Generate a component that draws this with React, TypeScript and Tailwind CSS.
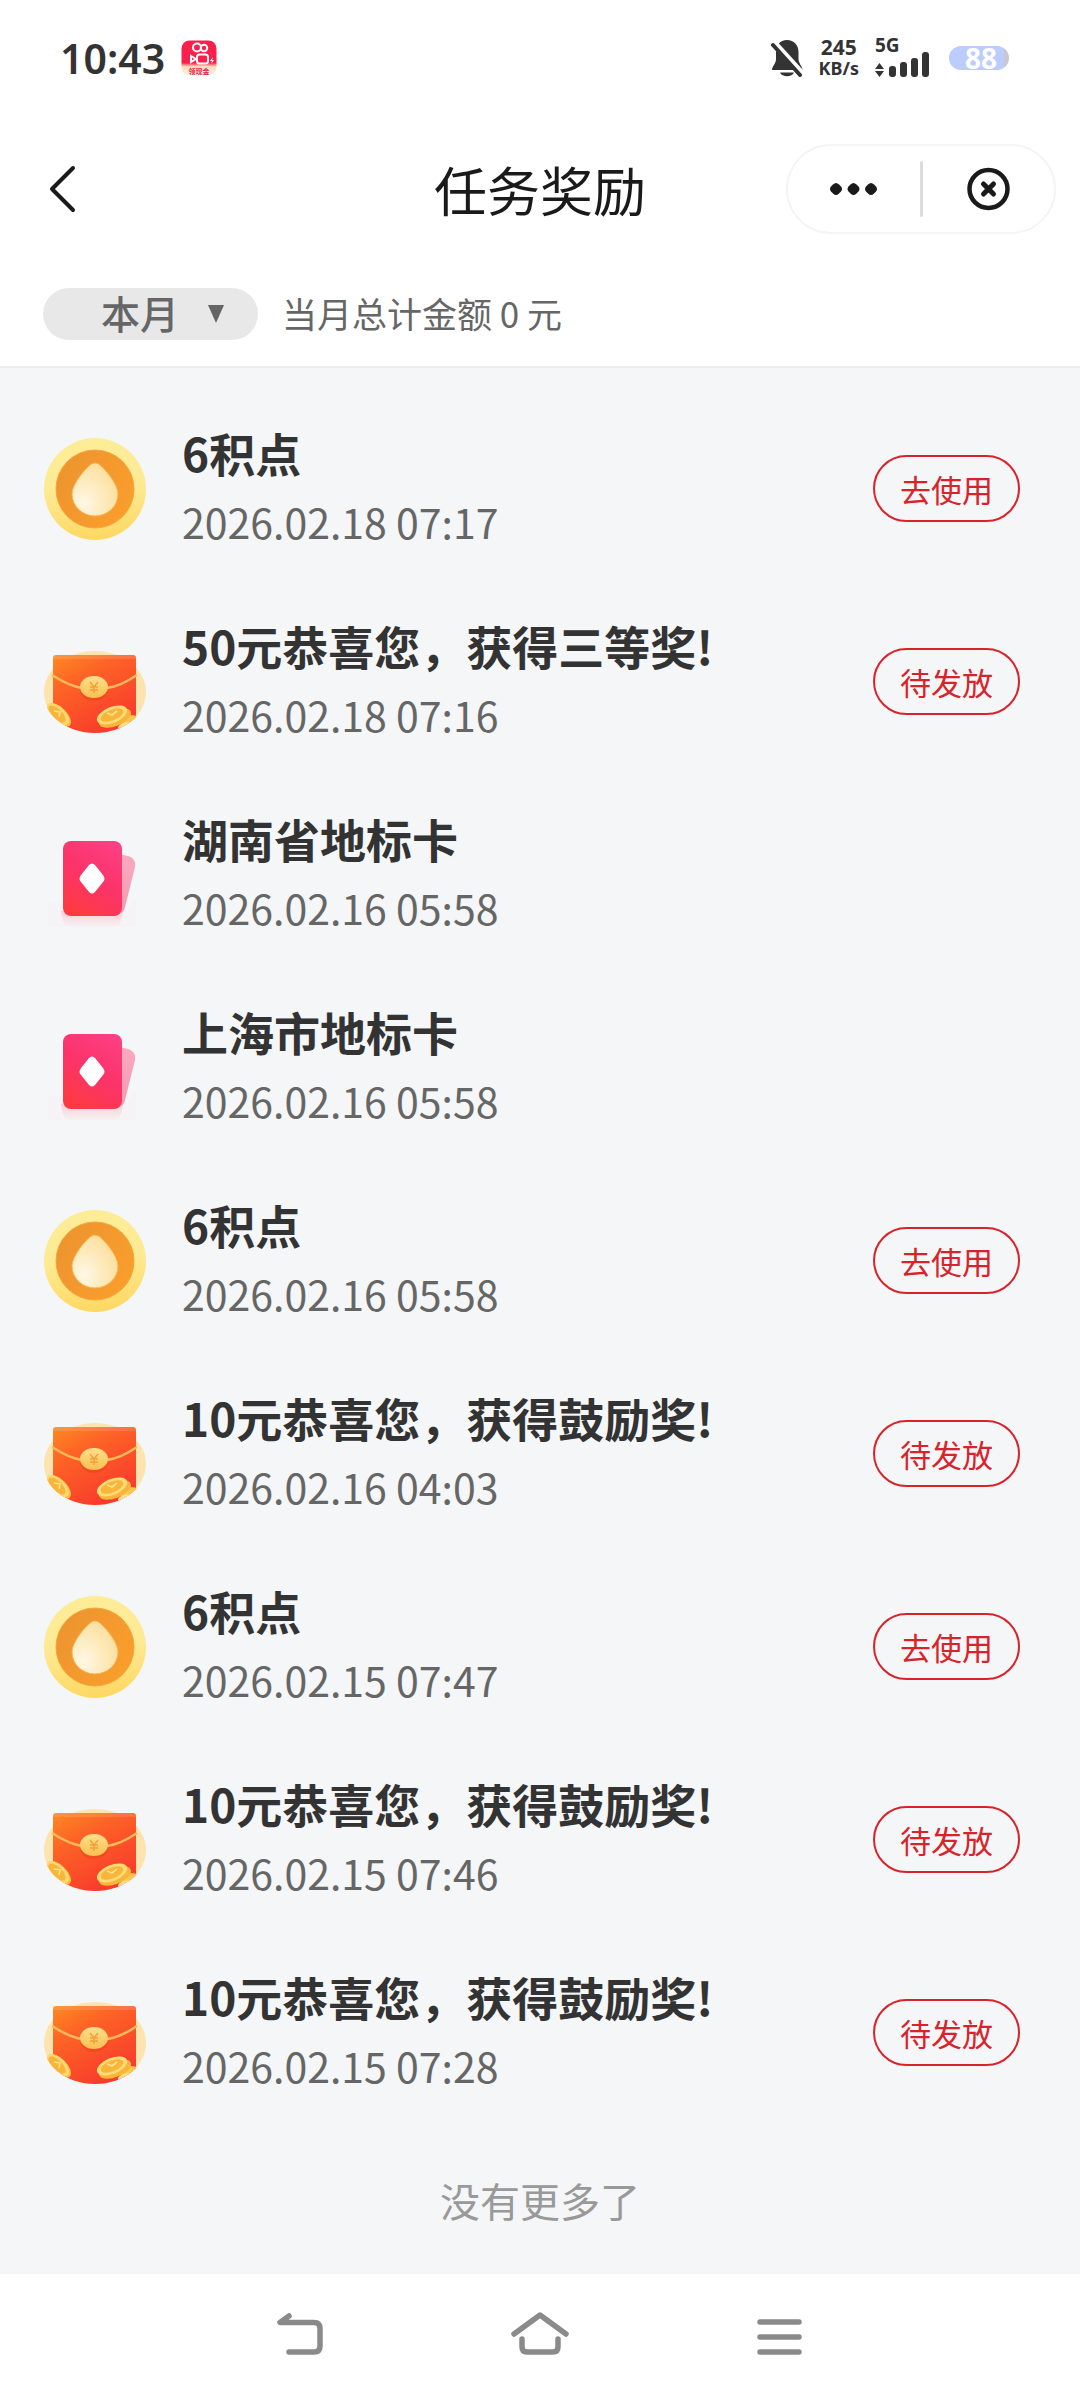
import type { ReactNode } from "react";

type Kind = "point" | "packet" | "card";

interface Reward {
   kind: Kind;
   title: string;
   time: string;
   action?: string;
}

const rewards: Reward[] = [
   { kind: "point", title: "6积点", time: "2026.02.18 07:17", action: "去使用" },
   { kind: "packet", title: "50元恭喜您，获得三等奖!", time: "2026.02.18 07:16", action: "待发放" },
   { kind: "card", title: "湖南省地标卡", time: "2026.02.16 05:58" },
   { kind: "card", title: "上海市地标卡", time: "2026.02.16 05:58" },
   { kind: "point", title: "6积点", time: "2026.02.16 05:58", action: "去使用" },
   { kind: "packet", title: "10元恭喜您，获得鼓励奖!", time: "2026.02.16 04:03", action: "待发放" },
   { kind: "point", title: "6积点", time: "2026.02.15 07:47", action: "去使用" },
   { kind: "packet", title: "10元恭喜您，获得鼓励奖!", time: "2026.02.15 07:46", action: "待发放" },
   { kind: "packet", title: "10元恭喜您，获得鼓励奖!", time: "2026.02.15 07:28", action: "待发放" },
];

function PointIcon() {
   return (
      <svg viewBox="0 0 104 104" className="size-26 shrink-0" aria-hidden="true">
         <defs>
            <linearGradient id="coinRim" x1="0.3" y1="0" x2="0.4" y2="1">
               <stop offset="0" stopColor="#fdec96" />
               <stop offset="0.5" stopColor="#feea94" />
               <stop offset="1" stopColor="#fdd862" />
            </linearGradient>
            <linearGradient id="coinFace" x1="0" y1="0" x2="1" y2="0.6">
               <stop offset="0" stopColor="#ec9330" />
               <stop offset="1" stopColor="#f99d2c" />
            </linearGradient>
            <radialGradient id="drop" cx="0.25" cy="0.75" r="0.9">
               <stop offset="0" stopColor="#fff8e6" />
               <stop offset="0.5" stopColor="#fdeabb" />
               <stop offset="1" stopColor="#fddc96" />
            </radialGradient>
         </defs>
         <circle cx="52" cy="52" r="51" fill="url(#coinRim)" />
         <circle cx="52" cy="52" r="39" fill="url(#coinFace)" stroke="#f3a63c" strokeWidth="1" />
         <path d="M47 28q5-4 10 0c7 6 18 20 18 29a23 22 0 0 1-46 0c0-9 11-23 18-29z" fill="url(#drop)" stroke="#f6b455" strokeWidth="1" />
      </svg>
   );
}

function PacketIcon() {
   return (
      <svg viewBox="0 0 104 104" className="size-26 shrink-0" aria-hidden="true">
         <defs>
            <linearGradient id="packet" x1="0" y1="0" x2="0.6" y2="1">
               <stop offset="0" stopColor="#fd8a22" />
               <stop offset="0.35" stopColor="#fd6426" />
               <stop offset="1" stopColor="#f93a2c" />
            </linearGradient>
            <linearGradient id="gold" x1="0" y1="0" x2="0" y2="1">
               <stop offset="0" stopColor="#fde08c" />
               <stop offset="1" stopColor="#fbbf4f" />
            </linearGradient>
            <clipPath id="packetClip">
               <path d="M0 20h104v42c0 22-23 41-52 41S0 84 0 62z" />
            </clipPath>
         </defs>
         <ellipse cx="52" cy="62" rx="51" ry="41" fill="#fde3ae" />
         <g clipPath="url(#packetClip)">
            <path d="M10 28q0-3 3-3h77q3 0 3 3v76H10z" fill="url(#packet)" />
            <path d="M10 29v-1q0-3 3-3h77q3 0 3 3v1z" fill="#fff" opacity="0.12" />
            <path d="M9 45q17 11 30 13M64 58q14-2 30-13" fill="none" stroke="#fcb95a" strokeWidth="2.5" />
            <ellipse cx="51" cy="60" rx="14" ry="11" fill="#e8391e" opacity="0.4" />
            <ellipse cx="51" cy="57" rx="14" ry="11" fill="url(#gold)" />
            <path d="M47 52l4 5 4-5M51 57v6M47 57h8M47 60h8" fill="none" stroke="#f0a040" strokeWidth="1.4" />
            <ellipse cx="16" cy="85" rx="15" ry="7.5" transform="rotate(44 16 85)" fill="#fbbf3c" />
            <ellipse cx="15" cy="84" rx="14" ry="7" transform="rotate(44 15 84)" fill="#fdd771" />
            <ellipse cx="14" cy="84" rx="11" ry="5" transform="rotate(44 14 84)" fill="#f9b53a" />
            <path d="M11 81l6 1-1 5" fill="none" stroke="#fde08c" strokeWidth="1.6" />
            <ellipse cx="86" cy="90" rx="13" ry="5" fill="#fcc84b" />
            <ellipse cx="87" cy="98" rx="12" ry="6" fill="#fddf8e" />
            <ellipse cx="72" cy="88" rx="17" ry="8" transform="rotate(-22 72 88)" fill="#f9b53a" />
            <ellipse cx="69" cy="85" rx="16" ry="8" transform="rotate(-22 69 85)" fill="#fddb76" />
            <ellipse cx="69" cy="85" rx="12" ry="5.5" transform="rotate(-22 69 85)" fill="#f9b53a" />
            <path d="M64 83l5 2 5-4" fill="none" stroke="#fde08c" strokeWidth="1.8" />
         </g>
      </svg>
   );
}

function CardIcon() {
   return (
      <svg viewBox="0 0 104 104" className="size-26 shrink-0" aria-hidden="true">
         <defs>
            <linearGradient id="cardFront" x1="0.8" y1="0" x2="0.3" y2="1">
               <stop offset="0" stopColor="#fd3f83" />
               <stop offset="0.5" stopColor="#fb336a" />
               <stop offset="1" stopColor="#fd3a42" />
            </linearGradient>
            <linearGradient id="cardBack" x1="0" y1="0" x2="0" y2="1">
               <stop offset="0" stopColor="#fba9c0" />
               <stop offset="1" stopColor="#f49aae" />
            </linearGradient>
            <linearGradient id="cardShadow" x1="0" y1="0" x2="0" y2="1">
               <stop offset="0" stopColor="#fbd0d6" />
               <stop offset="1" stopColor="#f6f1f4" />
            </linearGradient>
         </defs>
         <path d="M5 80h15v12h60l13-16v28H5z" fill="#f5f3f6" />
         <path d="M18 88h62q-2 16-8 16H26q-6 0-8-16z" fill="url(#cardShadow)" />
         <path d="M76 31l9 2c6 2 8 6 7 11L82 84c-1 5-4 7-10 8z" fill="url(#cardBack)" />
         <rect x="20" y="18" width="59" height="75" rx="8" fill="url(#cardFront)" />
         <path d="M46 42q3-3 6 0l8 10q3 4 0 7l-8 10q-3 3-6 0l-8-10q-3-3 0-7z" fill="#fff" />
      </svg>
   );
}

const icons: Record<Kind, ReactNode> = {
   point: <PointIcon />,
   packet: <PacketIcon />,
   card: <CardIcon />,
};

function StatusBar() {
   return (
      <section className="flex h-29 items-center justify-between pl-15 pr-[71px] text-[#333333]">
         <section className="flex items-center gap-4">
            <p className="text-[41px] leading-none font-semibold font-['Noto_Sans']">10:43</p>
            <svg viewBox="0 0 36 36" className="size-9" aria-hidden="true">
               <defs>
                  <linearGradient id="appBg" x1="0" y1="0" x2="0" y2="1">
                     <stop offset="0.64" stopColor="#fb1f4c" />
                     <stop offset="0.74" stopColor="#ffd9b8" />
                     <stop offset="1" stopColor="#fff6ec" />
                  </linearGradient>
               </defs>
               <rect x="0.5" y="0.5" width="35" height="35" rx="8" fill="url(#appBg)" />
               <g fill="none" stroke="#fff" strokeWidth="2">
                  <circle cx="16" cy="7.5" r="4" />
                  <circle cx="23" cy="8" r="3.2" />
                  <rect x="16" y="14.500" width="11" height="9" rx="2.500" />
                  <path d="M15 19l-5-3v6z" />
               </g>
               <path d="M32 17l-3 4h2l-1 3 3-4h-2z" fill="#fff" />
               <text x="18" y="34" textAnchor="middle" fontSize="7" fontWeight="bold" fill="#e0264c">领现金</text>
            </svg>
         </section>

         <section className="flex items-center">
            <svg viewBox="0 0 32 38" className="mr-4 h-[38px] w-8" aria-hidden="true">
               <path d="M16 1c7 0 11.500 5 11.500 12v7c0 4 4 8 4 11H1c0-4 4-6 4-11v-7C5 6 9 1 16 1z" fill="#333" />
               <path d="M9 33.500h14c-2 5-12 5-14 0z" fill="#333" />
               <path d="M0 1l31 34" stroke="#fff" strokeWidth="7" />
               <path d="M2 6l27 30" stroke="#333" strokeWidth="4" strokeLinecap="round" />
            </svg>
            <section className="mr-4 text-center font-['Noto_Sans'] font-bold">
               <p className="text-[21px] leading-[21px]">245</p>
               <p className="text-[18px] leading-[21px]">KB/s</p>
            </section>
            <section className="mr-5 font-['Noto_Sans'] font-bold">
               <p className="text-[19px] leading-[14px]">5G</p>
               <svg viewBox="0 0 54 26" className="h-[26px] w-[54px]" fill="#333" aria-hidden="true">
                  <path d="M0 17l4.500-6L9 17zM0 19h9l-4.500 6z" />
                  <rect x="14" y="14" width="7" height="11" rx="3" />
                  <rect x="25" y="10" width="7" height="15" rx="3" />
                  <rect x="36" y="6" width="7" height="19" rx="3" />
                  <rect x="47" y="0" width="7" height="25" rx="3" />
               </svg>
            </section>
            <p className="flex h-6 w-15 items-center justify-center rounded-full bg-linear-to-r from-[#bccdfd] from-92% to-[#cbc6cf] to-92% pl-1 font-['Noto_Sans'] text-[28px] leading-none font-bold text-white">
               88
            </p>
         </section>
      </section>
   );
}

function TitleBar() {
   return (
      <section className="grid h-[146px] grid-cols-[1fr_auto_1fr] items-center text-[#1a1a1a]">
         <button type="button" aria-label="返回" className="ml-12 justify-self-start">
            <svg viewBox="0 0 30 50" className="h-[50px] w-[30px]" fill="none" stroke="currentColor" strokeWidth="4" strokeLinecap="round" strokeLinejoin="round">
               <path d="M25 4L4 25l21 21" />
            </svg>
         </button>

         <h1 className="text-[53px] leading-none">任务奖励</h1>

         <section className="mr-6 flex h-[90px] w-[270px] items-center justify-self-end rounded-full border-2 border-[#f4f4f4]">
            <button type="button" aria-label="更多" className="flex flex-1 justify-center">
               <svg viewBox="0 0 48 14" className="h-[14px] w-12" fill="currentColor">
                  <path d="M6 1q1.500 0 3 1.500l2 2q2 2.500 0 5l-2 2q-3 3-6 0l-2-2q-2-2.500 0-5l2-2Q4.500 1 6 1z" />
                  <path d="M23.500 1q1.500 0 3 1.500l2 2q2 2.500 0 5l-2 2q-3 3-6 0l-2-2q-2-2.500 0-5l2-2Q22 1 23.500 1z" />
                  <path d="M41 1q1.500 0 3 1.500l2 2q2 2.500 0 5l-2 2q-3 3-6 0l-2-2q-2-2.500 0-5l2-2Q39.500 1 41 1z" />
               </svg>
            </button>
            <span className="h-14 w-[3px] rounded-full bg-[#dcdcdc]" />
            <button type="button" aria-label="关闭" className="flex flex-1 justify-center">
               <svg viewBox="0 0 44 44" className="size-11" fill="none" stroke="currentColor" strokeLinecap="round">
                  <circle cx="22.500" cy="22" r="19" strokeWidth="4.5" />
                  <path d="M17.500 17l10 10M27.500 17l-10 10" strokeWidth="5" />
               </svg>
            </button>
         </section>
      </section>
   );
}

function Filter() {
   return (
      <section className="flex h-[106px] items-center gap-6 border-b-2 border-[#ebecee] px-[43px] text-[#666666]">
         <label className="relative flex items-center">
            <select aria-label="月份" className="h-[52px] w-[215px] appearance-none rounded-full bg-[#e8e8e8] pb-1 pl-[58px] text-[39px] leading-[48px] font-medium">
               <option>本月</option>
            </select>
            <svg viewBox="0 0 16 18" className="pointer-events-none absolute right-[34px] h-[18px] w-4" fill="currentColor" aria-hidden="true">
               <path d="M0 0h16L8 18z" />
            </svg>
         </label>
         <p className="pb-1 text-[35px] leading-none">当月总计金额 0 元</p>
      </section>
   );
}

function RewardRow({ kind, title, time, action }: Reward) {
   return (
      <li className="flex h-[193px] items-center pr-15 pl-[43px]">
         {icons[kind]}
         <section className="ml-[35px] flex-1 pb-1">
            <h2 className="text-[46px] leading-[69px] font-bold text-[#333333]">{title}</h2>
            <p className="text-[41px] leading-[69px] text-[#666666]">{time}</p>
         </section>
         {action && (
            <button type="button" className="h-[67px] w-[147px] rounded-full border-2 border-[#d9232b] text-[31px] leading-none text-[#d9232b]">
               {action}
            </button>
         )}
      </li>
   );
}

function NavBar() {
   return (
      <nav className="flex h-[126px] items-center justify-center gap-45 bg-white pb-1 text-[#8a8a8a]">
         <button type="button" aria-label="后退">
            <svg viewBox="0 0 60 48" className="h-12 w-15" fill="none" stroke="currentColor" strokeWidth="5.5" strokeLinecap="round" strokeLinejoin="round">
               <path d="M19 5l-9 6.500h34q6 0 6 6v17.500q0 6-6 6H19" />
            </svg>
         </button>
         <button type="button" aria-label="主页">
            <svg viewBox="0 0 60 48" className="h-12 w-15" fill="none" stroke="currentColor" strokeWidth="5.5" strokeLinecap="round" strokeLinejoin="round">
               <path d="M4 23L30 4l26 19M12 28v8q0 5 5 5h26q5 0 5-5v-8" />
            </svg>
         </button>
         <button type="button" aria-label="最近任务">
            <svg viewBox="0 0 60 48" className="h-12 w-15" fill="none" stroke="currentColor" strokeWidth="5.5" strokeLinecap="round">
               <path d="M10 11h39M10 26h39M10 41h39" />
            </svg>
         </button>
      </nav>
   );
}

export default function App() {
   return (
      <main lang="zh-CN" className="min-h-screen bg-[#f4f6f8] font-['Noto_Sans_CJK_SC',sans-serif]">
         <header className="bg-white">
            <StatusBar />
            <TitleBar />
            <Filter />
         </header>

         <ul className="pt-6">
            {rewards.map((reward, i) => (
               <RewardRow key={i} {...reward} />
            ))}
         </ul>

         <p className="flex h-[145px] items-center justify-center pb-1 text-[40px] text-[#999999]">没有更多了</p>

         <NavBar />
      </main>
   );
}
